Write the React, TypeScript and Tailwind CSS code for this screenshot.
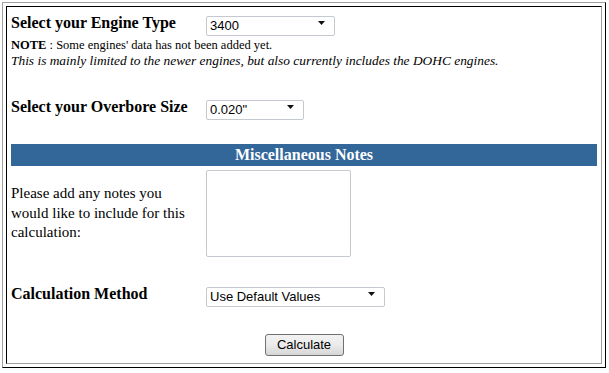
import { useState } from "react";

function Select({ value, options, width }: { value: string; options: string[]; width: string }) {
  const [v, setV] = useState(value);
  return (
    <div className={`relative h-[20px] ${width}`}>
      <select
        value={v}
        onChange={(e) => setV(e.target.value)}
        className="h-full w-full appearance-none rounded-[2px] border border-[#c5c9d0] bg-white pl-[3px] font-['Liberation_Sans',Arial,sans-serif] text-[13px] leading-[18px] text-black outline-none"
      >
        {options.map((o) => (
          <option key={o}>{o}</option>
        ))}
      </select>
      <svg className="pointer-events-none absolute right-[10px] top-[8px]" width="7" height="4" viewBox="0 0 7 4">
        <path d="M0 0h7L3.5 4z" fill="#111" />
      </svg>
    </div>
  );
}

export default function App() {
  const label = "w-[195px] shrink-0 font-['Liberation_Serif','Times_New_Roman',serif] text-[16px] font-bold text-black";

  return (
    <div className="h-[373px] w-[609px] bg-white p-[2px]">
      <div className="h-[366px] w-[604px] border border-b-black border-l-[#a0a0a0] border-r-black border-t-[#a0a0a0] p-[3px]">
        <div className="flex h-full flex-col border border-b-[#a0a0a0] border-l-black border-r-[#a0a0a0] border-t-black px-[4px] pt-[4px] font-['Liberation_Serif','Times_New_Roman',serif] text-black">
          <div className="flex h-[24px] items-center">
            <div className={label}>Select your Engine Type</div>
            <Select value="3400" options={["3400", "2800", "3100", "3300"]} width="w-[129px]" />
          </div>
          <div className="mt-[3px] leading-[15px]">
            <p className="text-[12.5px]">
              <b>NOTE</b> : Some engines' data has not been added yet.
            </p>
            <p className="text-[13.4px] italic">
              This is mainly limited to the newer engines, but also currently includes the DOHC engines.
            </p>
          </div>
          <div className="mt-[27px] flex h-[24px] items-center">
            <div className={label}>Select your Overbore Size</div>
            <Select value={'0.020"'} options={['0.000"', '0.020"', '0.030"', '0.040"']} width="w-[98px]" />
          </div>
          <div className="mt-[25px] flex h-[22px] items-center justify-center bg-[#336699] text-[16px] font-bold text-white">
            Miscellaneous Notes
          </div>
          <div className="mt-[4px] flex items-center">
            <div className="w-[195px] shrink-0 pr-[16px] text-[15px] leading-[19.5px]">
              Please add any notes you would like to include for this calculation:
            </div>
            <textarea className="h-[87px] w-[145px] resize-none rounded-[2px] border border-[#c5c9d0] bg-white outline-none" />
          </div>
          <div className="mt-[25px] flex h-[24px] items-center">
            <div className={label}>Calculation Method</div>
            <Select value="Use Default Values" options={["Use Default Values", "Use Custom Values"]} width="w-[179px]" />
          </div>
          <div className="mt-[28px] flex justify-center">
            <button className="h-[22px] w-[79px] rounded-[3px] border border-[#707070] bg-gradient-to-b from-[#f2f2f2] via-[#ebebeb] to-[#d6d6d6] font-['Liberation_Sans',Arial,sans-serif] text-[13px] text-black">
              Calculate
            </button>
          </div>
        </div>
      </div>
    </div>
  );
}
